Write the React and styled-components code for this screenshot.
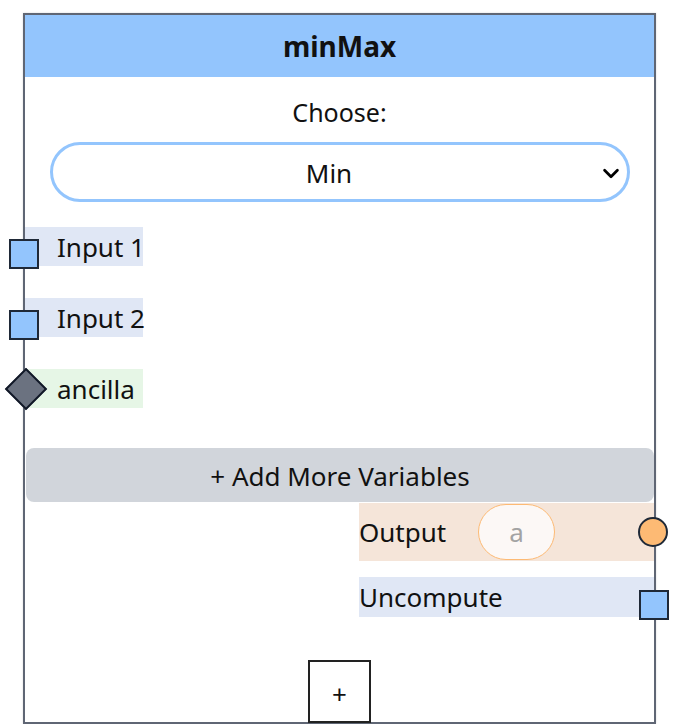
import { useState } from "react";
import styled, { createGlobalStyle } from "styled-components";

const GlobalStyle = createGlobalStyle`
  body {
    margin: 0;
    background: #ffffff;
    font-family: "Noto Sans", "Open Sans", sans-serif;
    color: #111;
  }
`;

const variables = [
  { name: "Input 1", kind: "input" },
  { name: "Input 2", kind: "input" },
  { name: "ancilla", kind: "ancilla" },
];

const App = () => {
  const [mode, setMode] = useState("min");

  return (
    <Page>
      <GlobalStyle />
      <Card>
        <Header>minMax</Header>
        <Label>Choose:</Label>
        <SelectWrap>
          <Select value={mode} onChange={(ev) => setMode(ev.target.value)}>
            <option value="min">Min</option>
            <option value="max">Max</option>
          </Select>
          <Chevron viewBox="0 0 24 24">
            <path d="M5 9l7 7 7-7" fill="none" stroke="#000" strokeWidth="3" strokeLinecap="round" strokeLinejoin="round" />
          </Chevron>
        </SelectWrap>
        <Inputs>
          {variables.map((v) => (
            <VarRow key={v.name} kind={v.kind}>
              {v.kind === "ancilla" ? <Diamond /> : <LeftSquare />}
              {v.name}
            </VarRow>
          ))}
        </Inputs>
        <AddButton>+ Add More Variables</AddButton>
        <OutRow tone="output">
          <OutLabel>Output</OutLabel>
          <Pill>a</Pill>
          <Circle />
        </OutRow>
        <OutRow tone="uncompute" spaced>
          <OutLabel>Uncompute</OutLabel>
          <RightSquare />
        </OutRow>
        <PlusButton>+</PlusButton>
      </Card>
    </Page>
  );
};

const Page = styled.div`
  padding: 13px 0 0 23px;
`;

const Card = styled.div`
  box-sizing: border-box;
  width: 633px;
  height: 711px;
  border: 2px solid #5f6674;
  background: #fff;
  display: flex;
  flex-direction: column;
  box-shadow: 0 0 2px rgba(0, 0, 0, 0.15);
`;

const Header = styled.div`
  height: 62px;
  background: #93c5fd;
  display: flex;
  align-items: center;
  justify-content: center;
  font-size: 28px;
  font-weight: 700;
`;

const Label = styled.div`
  margin-top: 20px;
  height: 30px;
  line-height: 30px;
  text-align: center;
  font-size: 25px;
`;

const SelectWrap = styled.div`
  position: relative;
  margin: 15px 24px 0 25px;
`;

const Select = styled.select`
  box-sizing: border-box;
  width: 100%;
  height: 60px;
  padding: 2px 22px 0 0;
  border: 3px solid #93c5fd;
  border-radius: 30px;
  background: #fff;
  appearance: none;
  text-align: center;
  text-align-last: center;
  font-family: inherit;
  font-size: 26px;
  color: #111;
  outline: none;
`;

const Chevron = styled.svg`
  position: absolute;
  right: 8px;
  top: 20px;
  width: 22px;
  height: 22px;
  pointer-events: none;
`;

const Inputs = styled.div`
  margin-top: 25px;
  display: flex;
  flex-direction: column;
  gap: 32px;
`;

const VarRow = styled.div`
  position: relative;
  box-sizing: border-box;
  width: 118px;
  height: 39px;
  padding-left: 32px;
  display: flex;
  align-items: center;
  font-size: 26px;
  white-space: nowrap;
  background: ${(p) => (p.kind === "ancilla" ? "#e6f6e6" : "#e0e7f5")};
`;

const LeftSquare = styled.span`
  position: absolute;
  left: -16px;
  top: 12px;
  box-sizing: border-box;
  width: 30px;
  height: 30px;
  background: #93c5fd;
  border: 2px solid #1f2937;
`;

const Diamond = styled.span`
  position: absolute;
  left: -14px;
  top: 5px;
  box-sizing: border-box;
  width: 30px;
  height: 30px;
  background: #6b7280;
  border: 2px solid #111827;
  transform: rotate(45deg);
`;

const AddButton = styled.button`
  margin: 40px 0 0 1px;
  height: 54px;
  padding-top: 3px;
  border: none;
  border-radius: 8px;
  background: #d1d5db;
  font-family: inherit;
  font-size: 26px;
  color: #111;
`;

const OutRow = styled.div`
  position: relative;
  box-sizing: border-box;
  align-self: flex-end;
  width: 295px;
  height: ${(p) => (p.tone === "output" ? "58px" : "40px")};
  margin-top: ${(p) => (p.spaced ? "16px" : "1px")};
  display: flex;
  align-items: center;
  font-size: 26px;
  background: ${(p) => (p.tone === "output" ? "#f5e5d9" : "#e0e7f5")};
`;

const OutLabel = styled.span`
  width: 119px;
`;

const Pill = styled.span`
  box-sizing: border-box;
  width: 77px;
  height: 56px;
  border: 1.5px solid #fdba74;
  border-radius: 28px;
  background: #fcf8f6;
  color: #a3a3a3;
  display: flex;
  align-items: center;
  justify-content: center;
`;

const Circle = styled.span`
  position: absolute;
  right: -14px;
  top: 14px;
  box-sizing: border-box;
  width: 30px;
  height: 30px;
  border-radius: 50%;
  background: #fdba74;
  border: 2px solid #1f2937;
`;

const RightSquare = styled.span`
  position: absolute;
  right: -15px;
  top: 13px;
  box-sizing: border-box;
  width: 30px;
  height: 30px;
  background: #93c5fd;
  border: 2px solid #1f2937;
`;

const PlusButton = styled.button`
  align-self: center;
  margin-top: auto;
  margin-bottom: -1px;
  box-sizing: border-box;
  width: 63px;
  height: 63px;
  border: 2px solid #222;
  background: #fff;
  font-family: inherit;
  font-size: 26px;
  color: #111;
  padding-top: 6px;
`;

export default App;
